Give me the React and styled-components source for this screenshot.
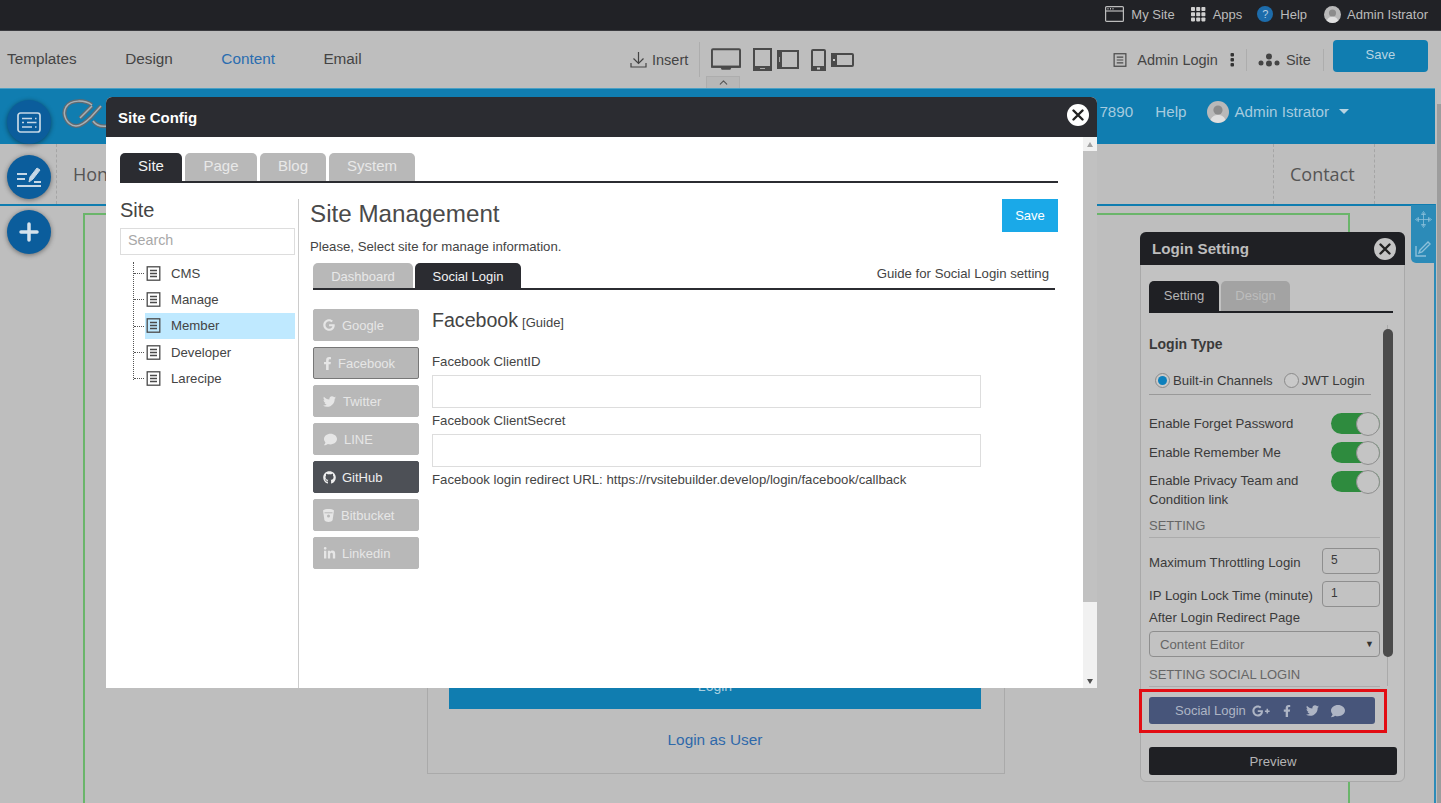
import React from 'react'
import styled, { createGlobalStyle } from 'styled-components'
import {
  FaComment, FaFacebookF, FaGithub, FaGoogle, FaGooglePlusG, FaLinkedinIn, FaTwitter,
} from 'react-icons/fa'
import { FiChevronUp } from 'react-icons/fi'

const GlobalStyle = createGlobalStyle`
  html, body {
    margin: 0;
    padding: 0;
    height: 100%;
    overflow: hidden;
    background: #bebebe;
    font-family: 'Liberation Sans', Arial, sans-serif;
  }
  * { box-sizing: border-box; }
`

const FileIcon = ({ size = 15, color = '#4a4a4a' }) => (
  <svg width={size} height={size} viewBox="0 0 15 15" fill="none" stroke={color} strokeWidth="1.3">
    <rect x="1.2" y="0.8" width="12.6" height="13.4" />
    <path d="M4 4.5h7M4 7.5h7M4 10.5h7" />
  </svg>
)

const Avatar = ({ size, bg = '#b9b9b9' }) => (
  <svg width={size} height={size} viewBox="0 0 22 22">
    <circle cx="11" cy="11" r="11" fill={bg} />
    <circle cx="11" cy="9" r="4.6" fill="#8c8c8c" />
    <path d="M3.5 19c1.5-4 4.5-5 7.5-5s6 1 7.5 5a11 11 0 0 1-15 0z" fill="#e0e0e0" />
  </svg>
)

const CloseIcon = () => (
  <svg width="12" height="12" viewBox="0 0 12 12" stroke="#222" strokeWidth="2.4" strokeLinecap="round">
    <path d="M1.5 1.5l9 9M10.5 1.5l-9 9" />
  </svg>
)

const BucketIcon = () => (
  <svg width="11" height="13" viewBox="0 0 11 13" fill="#e6e6e6">
    <path d="M0 1.500C1 .3 3.500 0 5.500 0s4.500.3 5.500 1.500L9.600 11c-.2 1.200-2.400 2-4.100 2s-3.900-.8-4.100-2z" />
    <path d="M1.500 3.800h8" stroke="#b8b8b8" strokeWidth="1" />
    <circle cx="5.500" cy="7" r="1.500" fill="#b8b8b8" />
  </svg>
)

const logoPaths = 'M30 6C23 1 9 0 4 8c-4 7 0 18 10 19 6 0 11-5 15-9L39 7M18 19L30 7M31 22c3 4 8 6 14 5'

const Logo = () => (
  <svg width="60" height="30" viewBox="0 0 60 30" fill="none">
    <path d={logoPaths} stroke="#5f6b73" strokeWidth="4" />
    <path d={logoPaths} stroke="#a8b0b5" strokeWidth="1.500" />
  </svg>
)

const Page = styled.div`
  position: relative;
  width: 1441px;
  height: 803px;
  overflow: hidden;
  display: flex;
  flex-direction: column;
  background: #bebebe;
`

const TopBar = styled.div`
  height: 31px;
  flex: none;
  background: #212226;
  border-bottom: 1px solid #3a3b3f;
  display: flex;
  justify-content: flex-end;
  align-items: center;
  padding: 0 13px 2px 0;
  color: #bcbcbc;
  font-size: 13px;
`

const TopItem = styled.div`
  display: flex;
  align-items: center;
  gap: ${(p) => p.$gap || 7}px;
  margin-left: ${(p) => p.$left || 0}px;
`

const HelpDot = styled.span`
  width: 16px;
  height: 16px;
  border-radius: 50%;
  background: #1d6cab;
  color: #b9cfe2;
  font-size: 11px;
  display: flex;
  align-items: center;
  justify-content: center;
`

const Toolbar = styled.div`
  position: relative;
  height: 57px;
  flex: none;
  background: #bebebe;
  display: flex;
  align-items: center;
  color: #444;
  font-size: 14.5px;
  padding-left: 7px;
`

const MainNav = styled.nav`
  display: flex;
  gap: 48.500px;
  width: 623px;
  margin-top: -1px;
  font-size: 15.3px;
`

const NavLink = styled.span`
  color: ${(p) => (p.$active ? '#2a6db0' : '#444')};
`

const ToolGroup = styled.div`
  display: flex;
  align-items: center;
  gap: ${(p) => p.$gap || 5}px;
  margin-left: ${(p) => p.$left || 0}px;
`

const Rule = styled.div`
  width: 1px;
  height: ${(p) => p.$h || 35}px;
  background: #adadad;
  margin-left: ${(p) => p.$left || 0}px;
`

const KebabIcon = styled.svg`
  margin-left: 12px;
  flex: none;
`

const Collapse = styled.div`
  position: absolute;
  left: 706px;
  bottom: 0;
  width: 34px;
  height: 12px;
  background: #b7b7b7;
  border: 1px solid #adadad;
  border-bottom: 0;
  color: #555;
  display: flex;
  justify-content: center;
  align-items: center;
`

const SaveTop = styled.div`
  width: 95px;
  height: 32px;
  margin-left: 9px;
  margin-top: -8px;
  border-radius: 4px;
  background: #107db0;
  color: #b7d4e2;
  font-size: 13px;
  display: flex;
  align-items: center;
  justify-content: center;
  padding-bottom: 2px;
`

const SiteHeader = styled.header`
  height: 56px;
  flex: none;
  width: 1435px;
  background: #107db0;
  border-top: 1px solid #4aa0c5;
  display: flex;
  align-items: center;
  padding: 0 86px 0 62px;
  color: #a6cbdf;
  font-size: 15.2px;
`

const LogoWrap = styled.div`
  display: flex;
  margin-top: -6px;
`

const HeaderRight = styled.div`
  margin-left: auto;
  display: flex;
  align-items: center;
  margin-top: -10px;
`

const HeaderLink = styled.span`
  margin-left: ${(p) => p.$left || 0}px;
`

const AvatarSlot = styled.span`
  display: flex;
  margin: 0 5px 0 21px;
`

const Caret = styled.span`
  width: 0;
  height: 0;
  margin-left: 10px;
  border-left: 5px solid transparent;
  border-right: 5px solid transparent;
  border-top: 5px solid #b7d4e2;
`

const SiteNav = styled.div`
  height: 60px;
  flex: none;
  width: 1435px;
  display: flex;
  align-items: stretch;
  color: #555;
  font-family: 'Open Sans', sans-serif;
  font-size: 18px;
  padding-left: 56px;
`

const SiteNavItem = styled.div`
  display: flex;
  align-items: center;
  padding: 0 16px 1px;
  border-left: 1px dashed #a5a5a5;
  width: ${(p) => p.$w || 'auto'};
  ${(p) => p.$end && 'border-right: 1px dashed #a5a5a5;'}
`

const Canvas = styled.main`
  flex: 1;
  width: 1436px;
  border-top: 2px solid #107db0;
  border-right: 2px solid #2c8bb8;
  padding: 7px 0 0 83px;
  min-height: 0;
`

const GreenBox = styled.div`
  width: 1267px;
  height: 700px;
  border: 2px solid #6ab56a;
  border-bottom: 0;
  padding: 0 0 0 342px;
  display: flex;
  flex-direction: column;
`

const LoginCard = styled.div`
  width: 578px;
  height: 566px;
  margin-top: -7px;
  padding: 0 23px 0 21px;
  border: 1px solid #aaa;
  display: flex;
  flex-direction: column;
  justify-content: flex-end;
  align-items: stretch;
`

const LoginBtn = styled.div`
  height: 54px;
  background: #107db0;
  color: #a9cfe0;
  font-size: 14px;
  line-height: 16px;
  text-align: center;
  padding-top: 23px;
`

const LoginUser = styled.div`
  height: 64px;
  padding-top: 22px;
  text-align: center;
  color: #2f69aa;
  font-size: 15.4px;
`

const CircleStack = styled.div`
  position: absolute;
  left: 7px;
  top: 100px;
  display: flex;
  flex-direction: column;
  gap: 11px;
`

const Circle = styled.div`
  width: 44px;
  height: 44px;
  border-radius: 50%;
  background: #0b5d9c;
  box-shadow: 0 1px 5px rgba(0, 0, 0, 0.45);
  display: flex;
  align-items: center;
  justify-content: center;
`

const Handle = styled.div`
  position: absolute;
  left: 1411px;
  top: 205px;
  width: 24px;
  height: 58px;
  background: #2c8bb8;
  border-bottom-left-radius: 5px;
  display: flex;
  flex-direction: column;
  align-items: center;
  justify-content: space-around;
`

const PageScroll = styled.div`
  position: absolute;
  left: 1437px;
  top: 104px;
  width: 4px;
  height: 699px;
  background: #9d9d9d;
`

const Modal = styled.section`
  position: absolute;
  left: 106px;
  top: 97px;
  width: 991px;
  height: 591px;
  border-radius: 6px 6px 0 0;
  display: flex;
  flex-direction: column;
  background: #fff;
`

const ModalHead = styled.div`
  height: 40px;
  flex: none;
  background: #2b2c31;
  border-radius: 6px 6px 0 0;
  display: flex;
  align-items: center;
  justify-content: space-between;
  padding: 0 9px 0 12px;
  color: #fff;
  font-size: 15px;
  font-weight: bold;
`

const CloseBtn = styled.div`
  width: 22px;
  height: 22px;
  border-radius: 50%;
  background: ${(p) => p.$bg || '#fff'};
  margin-top: ${(p) => p.$top || 0}px;
  margin-right: ${(p) => p.$right || 0}px;
  display: flex;
  align-items: center;
  justify-content: center;
`

const ModalBody = styled.div`
  flex: 1;
  min-height: 0;
  display: flex;
`

const ModalMain = styled.div`
  width: 977px;
  padding: 16px 25px 0 14px;
  display: flex;
  flex-direction: column;
`

const TabRow = styled.div`
  display: flex;
  gap: ${(p) => p.$gap || 3}px;
  border-bottom: 2px solid ${(p) => p.$line || '#2b2c31'};
  flex: none;
  width: ${(p) => p.$w || 'auto'};
`

const Tab = styled.div`
  height: ${(p) => p.$h || 28}px;
  width: ${(p) => p.$w}px;
  padding-bottom: ${(p) => p.$pb || 0}px;
  padding-top: ${(p) => p.$pt || 0}px;
  border-radius: 5px 5px 0 0;
  background: ${(p) => (p.$active ? '#2b2c31' : '#b8b8b8')};
  color: ${(p) => (p.$active ? '#f2f2f2' : '#e8e8e8')};
  font-size: ${(p) => p.$size || 15}px;
  display: flex;
  align-items: center;
  justify-content: center;
`

const PanelTab = styled(Tab)`
  background: ${(p) => (p.$active ? '#1f2024' : '#a3a3a3')};
  color: ${(p) => (p.$active ? '#b4b4b4' : '#bdbdbd')};
`

const Split = styled.div`
  flex: 1;
  min-height: 0;
  display: flex;
  margin-top: 16px;
`

const Sidebar = styled.aside`
  width: 179px;
  border-right: 1px solid #ccc;
  padding-right: 3px;
  flex: none;
  color: #444;
`

const SideTitle = styled.div`
  font-size: 20px;
  line-height: 23px;
  margin-bottom: 6px;
`

const SearchBox = styled.div`
  width: 175px;
  height: 27px;
  border: 1px solid #ddd;
  color: #a8a8a8;
  font-size: 14.3px;
  padding: 3px 7px;
`

const Tree = styled.ul`
  position: relative;
  list-style: none;
  margin: 5px 0 0;
  padding: 0 0 0 25px;
  width: 175px;
  &::before {
    content: '';
    position: absolute;
    left: 13px;
    top: 2px;
    height: 118px;
    border-left: 1px dotted #555;
  }
`

const TreeItem = styled.li`
  position: relative;
  height: 26.3px;
  display: flex;
  align-items: center;
  gap: 10px;
  padding-left: 1px;
  font-size: 13.2px;
  color: #444;
  background: ${(p) => (p.$active ? '#bfe9ff' : 'transparent')};
  &::before {
    content: '';
    position: absolute;
    left: -11px;
    top: 13px;
    width: 10px;
    border-top: 1px dotted #555;
  }
`

const Content = styled.div`
  flex: 1;
  min-width: 0;
  padding-left: 11px;
  color: #444;
`

const TitleRow = styled.div`
  display: flex;
  justify-content: space-between;
  align-items: flex-start;
  height: 39px;
`

const Title = styled.h1`
  margin: 0;
  font-size: 24.2px;
  line-height: 29px;
  font-weight: normal;
  color: #4a4a4a;
`

const SaveBtn = styled.div`
  width: 56px;
  height: 33px;
  background: #1aa9e8;
  color: #fff;
  font-size: 13px;
  display: flex;
  align-items: center;
  justify-content: center;
`

const Hint = styled.div`
  font-size: 13.2px;
  line-height: 16px;
  height: 25px;
  padding-top: 1px;
`

const SubTabs = styled.div`
  position: relative;
  margin-left: 3px;
  width: 742px;
`

const GuideLink = styled.span`
  position: absolute;
  right: 6px;
  top: 3px;
  font-size: 13.2px;
  color: #444;
`

const Panes = styled.div`
  display: flex;
  margin-top: 19px;
  margin-left: 3px;
  gap: 13px;
`

const ProviderList = styled.div`
  width: 106px;
  flex: none;
  display: flex;
  flex-direction: column;
  gap: 6px;
`

const Provider = styled.div`
  height: 32px;
  border-radius: 2px;
  background: ${(p) => (p.$dark ? '#4d5056' : '#b8b8b8')};
  border: 1px solid ${(p) => (p.$selected ? '#777' : p.$dark ? '#4d5056' : '#b8b8b8')};
  color: ${(p) => (p.$dark ? '#eee' : '#e6e6e6')};
  font-size: 13px;
  display: flex;
  align-items: center;
  gap: 7px;
  padding-left: 9px;
`

const ProviderIcon = styled.span`
  width: ${(p) => p.$w}px;
  flex: none;
  display: flex;
  justify-content: center;
  svg { flex: none; }
`

const Fields = styled.div`
  flex: 1;
`

const FieldHead = styled.div`
  font-size: 19.6px;
  line-height: 23px;
  height: 43px;
  span { font-size: 13px; margin-left: 4px; }
`

const Label = styled.div`
  font-size: 13.2px;
  line-height: 15px;
  height: ${(p) => p.$h || 23}px;
  padding-top: ${(p) => p.$top || 0}px;
  margin-top: ${(p) => p.$mt || 0}px;
`

const Input = styled.div`
  width: 549px;
  height: 33px;
  border: 1px solid #ddd;
  background: #fff;
  margin-bottom: ${(p) => p.$mb || 0}px;
`

const ScrollTrack = styled.div`
  width: 14px;
  flex: none;
  background: #f1f1f1;
  display: flex;
  flex-direction: column;
  align-items: center;
  padding-bottom: 4px;
`

const Thumb = styled.div`
  width: 100%;
  height: 451px;
  margin-top: 4px;
  background: #c1c1c1;
`

const Arrow = styled.span`
  width: 0;
  height: 0;
  margin-top: ${(p) => (p.$down ? 'auto' : '5px')};
  border-left: 3.5px solid transparent;
  border-right: 3.5px solid transparent;
  ${(p) => (p.$down ? 'border-top: 5px solid #505050;' : 'border-bottom: 5px solid #a3a3a3;')}
`

const Panel = styled.section`
  position: absolute;
  left: 1140px;
  top: 232px;
  width: 265px;
  height: 550px;
  border: 1px solid #a9a9a9;
  border-radius: 6px;
  background: #c2c2c2;
  color: #3a3a3a;
  font-size: 13.2px;
  display: flex;
  flex-direction: column;
`

const PanelHead = styled.div`
  margin: -1px -1px 0;
  height: 33px;
  flex: none;
  background: #1f2024;
  border-radius: 6px 6px 0 0;
  color: #bdbdbd;
  font-size: 15.2px;
  font-weight: bold;
  display: flex;
  align-items: center;
  justify-content: space-between;
  padding: 0 9px 0 12px;
`

const PanelBody = styled.div`
  padding: 16px 11px 0 8px;
  display: flex;
  flex-direction: column;
  flex: 1;
`

const PanelScroll = styled.div`
  position: relative;
  margin-top: 12px;
  width: 244px;
  height: 361px;
  &::after {
    content: '';
    position: absolute;
    right: 5px;
    top: 0;
    bottom: 0;
    border-right: 1px solid #aaa;
  }
`

const PanelThumb = styled.div`
  position: absolute;
  z-index: 1;
  right: 0;
  top: 4px;
  width: 10px;
  height: 328px;
  border-radius: 5px;
  background: #4b4b4b;
`

const PanelContent = styled.div`
  width: 231px;
`

const GroupTitle = styled.div`
  font-size: 14px;
  font-weight: bold;
  line-height: 16px;
  padding-top: 11px;
  height: 38px;
`

const RadioRow = styled.div`
  width: 222px;
  height: 32px;
  padding: 10px 0 0 6px;
  border-bottom: 1px solid #999;
  display: flex;
  align-items: flex-start;
  gap: 3px;
  white-space: nowrap;
`

const Radio = styled.span`
  width: 15px;
  height: 15px;
  flex: none;
  border-radius: 50%;
  border: 1px solid #8a8a8a;
  background: #c9c9c9;
  display: flex;
  align-items: center;
  justify-content: center;
  margin-left: ${(p) => p.$left || 0}px;
  &::after {
    content: '';
    display: ${(p) => (p.$on ? 'block' : 'none')};
    width: 9px;
    height: 9px;
    border-radius: 50%;
    background: #0d80bc;
  }
`

const SwitchRow = styled.div`
  display: flex;
  justify-content: space-between;
  align-items: flex-start;
  width: 231px;
  height: ${(p) => p.$h || 29}px;
  line-height: ${(p) => (p.$h ? 19 : 21)}px;
  margin-top: ${(p) => p.$top || 0}px;
`

const Switch = styled.span`
  position: relative;
  flex: none;
  width: 49px;
  height: 21px;
  border-radius: 11px;
  background: #2e8b3e;
  &::after {
    content: '';
    position: absolute;
    right: 0;
    top: -1px;
    width: 22px;
    height: 22px;
    border-radius: 50%;
    background: #c4c4c4;
    border: 1px solid #8e8e8e;
  }
`

const SectionLabel = styled.div`
  width: 231px;
  height: 23px;
  padding-top: 3px;
  margin-top: ${(p) => p.$top || 0}px;
  border-bottom: 1px solid #ababab;
  color: #666;
  font-size: 13px;
  line-height: 15px;
`

const NumberRow = styled.div`
  display: flex;
  justify-content: space-between;
  align-items: center;
  width: 231px;
  height: 26px;
  margin-top: ${(p) => p.$top || 0}px;
`

const NumberLabel = styled.span`
  padding-top: 2px;
`

const NumberBox = styled.div`
  width: 58px;
  height: 26px;
  border: 1px solid #8e8e8e;
  border-radius: 4px;
  padding: 4px 8px;
  font-size: 12px;
`

const SelectBox = styled.div`
  width: 231px;
  height: 26px;
  margin-top: 5px;
  border: 1px solid #8e8e8e;
  border-radius: 4px;
  color: #666;
  padding: 0 5px 0 10px;
  display: flex;
  align-items: center;
  justify-content: space-between;
  span { font-size: 9px; color: #333; }
`

const RedBox = styled.div`
  margin: 3px 0 0 -10px;
  width: 248px;
  height: 44px;
  border: 3px solid #e30d13;
  padding: 5px 0 0 7px;
  flex: none;
`

const SocialBtn = styled.div`
  width: 226px;
  height: 27px;
  border-radius: 3px;
  background: #47557a;
  color: #aeb5c5;
  font-size: 13px;
  display: flex;
  align-items: center;
  padding-left: 26px;
`

const SocialIcon = styled.span`
  display: flex;
  margin-left: ${(p) => p.$left}px;
`

const PreviewBtn = styled.div`
  width: 248px;
  height: 28px;
  margin-top: 14px;
  border-radius: 3px;
  background: #1f2024;
  color: #b4b4b4;
  display: flex;
  align-items: center;
  justify-content: center;
`

const providers = [
  { name: 'Google', w: 12, icon: <FaGoogle size={12} /> },
  { name: 'Facebook', w: 8, icon: <FaFacebookF size={13} />, selected: true },
  { name: 'Twitter', w: 13, icon: <FaTwitter size={13} /> },
  { name: 'LINE', w: 14, icon: <FaComment size={13} /> },
  { name: 'GitHub', w: 12, icon: <FaGithub size={13} />, dark: true },
  { name: 'Bitbucket', w: 11, icon: <BucketIcon /> },
  { name: 'Linkedin', w: 12, icon: <FaLinkedinIn size={13} /> },
]

const treeItems = ['CMS', 'Manage', 'Member', 'Developer', 'Larecipe']

const App = () => {
  return (
    <Page>
      <GlobalStyle />
      <TopBar>
        <TopItem>
          <svg width="19" height="16" viewBox="0 0 19 16" fill="none" stroke="#bcbcbc" strokeWidth="1.2">
            <rect x="0.6" y="0.6" width="17.8" height="14.8" rx="1" />
            <path d="M0.6 5h17.8" />
            <path d="M2.5 2.8h1M5 2.8h1M7.500 2.8h1" strokeWidth="1.4" />
          </svg>
          My Site
        </TopItem>
        <TopItem $left={16}>
          <svg width="15" height="15" viewBox="0 0 15 15" fill="#d0d0d0">
            {[0, 5.2, 10.4].map((y) => [0, 5.2, 10.4].map((x) => (
              <rect key={`${x}-${y}`} x={x} y={y} width="4" height="4" rx="0.8" />
            )))}
          </svg>
          Apps
        </TopItem>
        <TopItem $left={15}>
          <HelpDot>?</HelpDot>
          Help
        </TopItem>
        <TopItem $left={17} $gap={6}>
          <Avatar size={17} />
          Admin Istrator
        </TopItem>
      </TopBar>

      <Toolbar>
        <MainNav>
          <NavLink>Templates</NavLink>
          <NavLink>Design</NavLink>
          <NavLink $active>Content</NavLink>
          <NavLink>Email</NavLink>
        </MainNav>
        <ToolGroup>
          <svg width="17" height="17" viewBox="0 0 17 17" fill="none" stroke="#444" strokeWidth="1.2">
            <path d="M8.500 1v11M3.500 7.500l5 5 5-5M1 12v4h15v-4" />
          </svg>
          Insert
        </ToolGroup>
        <Rule $left={11} />
        <ToolGroup $left={11} $gap={12}>
          <svg width="30" height="23" viewBox="0 0 31 23" fill="none">
            <rect x="1" y="1" width="29" height="18" rx="1" stroke="#4a4a4a" strokeWidth="2" />
            <path d="M0 18h31v2H21l-1 2h-9l-1-2H0z" fill="#4a4a4a" />
          </svg>
          <ToolGroup $gap={5}>
            <svg width="19" height="23" viewBox="0 0 19 23" fill="none">
              <rect x="1" y="1" width="17" height="21" stroke="#4a4a4a" strokeWidth="2" />
              <path d="M0 18h19v5H0z" fill="#4a4a4a" />
              <path d="M7 20.500h5" stroke="#aaa" />
            </svg>
            <svg width="22" height="19" viewBox="0 0 22 19" fill="none">
              <rect x="1" y="1" width="20" height="17" stroke="#4a4a4a" strokeWidth="2" />
              <path d="M0 0h5v19H0z" fill="#4a4a4a" />
              <path d="M2.500 7v5" stroke="#aaa" />
            </svg>
          </ToolGroup>
          <ToolGroup $gap={5}>
            <svg width="15" height="22" viewBox="0 0 15 22" fill="none">
              <rect x="1" y="1" width="13" height="20" rx="1" stroke="#4a4a4a" strokeWidth="2" />
              <path d="M0 17h15v5H0z" fill="#4a4a4a" />
              <path d="M6 18.500h3v2H6z" fill="#ccc" />
            </svg>
            <svg width="23" height="14" viewBox="0 0 23 14" fill="none">
              <rect x="1" y="1" width="21" height="12" rx="1" stroke="#4a4a4a" strokeWidth="2" />
              <path d="M0 0h6v14H0z" fill="#4a4a4a" />
              <path d="M2 6h2v2H2z" fill="#ccc" />
            </svg>
          </ToolGroup>
        </ToolGroup>
        <ToolGroup $left={259} $gap={10}>
          <FileIcon size={14} />
          <span>Admin Login</span>
        </ToolGroup>
        <KebabIcon width="4" height="14" viewBox="0 0 4 14" fill="#333">
          <rect x="0.500" width="3.500" height="3.500" rx="1" />
          <rect x="0.500" y="5" width="3.500" height="3.500" rx="1" />
          <rect x="0.500" y="10" width="3.500" height="3.500" rx="1" />
        </KebabIcon>
        <Rule $left={12} $h={22} />
        <ToolGroup $left={11} $gap={6}>
          <svg width="22" height="14" viewBox="0 0 22 14" fill="#444">
            <circle cx="11" cy="3.500" r="3" />
            <circle cx="3" cy="10" r="2.500" />
            <circle cx="11" cy="10.500" r="3" />
            <circle cx="19" cy="10" r="2.500" />
          </svg>
          <span>Site</span>
        </ToolGroup>
        <Rule $left={12} $h={22} />
        <SaveTop>Save</SaveTop>
        <Collapse><FiChevronUp size={13} /></Collapse>
      </Toolbar>

      <SiteHeader>
        <LogoWrap><Logo /></LogoWrap>
        <HeaderRight>
          <span>7890</span>
          <HeaderLink $left={22}>Help</HeaderLink>
          <AvatarSlot><Avatar size={22} /></AvatarSlot>
          <span>Admin Istrator</span>
          <Caret />
        </HeaderRight>
      </SiteHeader>

      <SiteNav>
        <SiteNavItem $w="1217px">Hon</SiteNavItem>
        <SiteNavItem $w="102px" $end>Contact</SiteNavItem>
      </SiteNav>

      <Canvas>
        <GreenBox>
          <LoginCard>
            <LoginBtn>Login</LoginBtn>
            <LoginUser>Login as User</LoginUser>
          </LoginCard>
        </GreenBox>
      </Canvas>

      <PageScroll />

      <CircleStack>
        <Circle>
          <svg width="24" height="21" viewBox="0 0 24 21" fill="none" stroke="#c6d8e6" strokeWidth="1.700">
            <rect x="1" y="1" width="22" height="19" rx="2.500" />
            <path d="M5 6.500h10M18 6.500h1.500M5 10.500h2M10 10.500h9.500M5 15h10M18 15h1.500" />
          </svg>
        </Circle>
        <Circle>
          <svg width="26" height="22" viewBox="0 0 26 22" fill="none" stroke="#c6d8e6" strokeWidth="2">
            <path d="M1 8h10M1 13h8M1 20h24" />
            <path d="M13 16l1-5 7-9 3 2-7 9z" fill="#c6d8e6" strokeWidth="1" />
            <path d="M18 16h7" />
          </svg>
        </Circle>
        <Circle>
          <svg width="20" height="20" viewBox="0 0 20 20" stroke="#d5e2ec" strokeWidth="3.500" strokeLinecap="round">
            <path d="M10 2v16M2 10h16" />
          </svg>
        </Circle>
      </CircleStack>

      <Handle>
        <svg width="17" height="17" viewBox="0 0 17 17" fill="none" stroke="#8cc0da" strokeWidth="0.800">
          <path d="M8.500 2v13M2 8.500h13" />
          <path d="M8.500 0.500L6.500 3.500h4zM8.500 16.500l-2-3h4zM0.500 8.500l3-2v4zM16.500 8.500l-3-2v4z" />
        </svg>
        <svg width="17" height="17" viewBox="0 0 17 17" fill="none" stroke="#8cc0da" strokeWidth="1.400">
          <path d="M5 10L13 2l2 2-8 8-3 1zM1 6v10h10" />
        </svg>
      </Handle>

      <Modal>
        <ModalHead>
          Site Config
          <CloseBtn $top={-4} $right={-1}><CloseIcon /></CloseBtn>
        </ModalHead>
        <ModalBody>
          <ModalMain>
            <TabRow>
              <Tab $w={62} $pb={3} $active>Site</Tab>
              <Tab $w={72} $pb={3}>Page</Tab>
              <Tab $w={66} $pb={3}>Blog</Tab>
              <Tab $w={86} $pb={3}>System</Tab>
            </TabRow>
            <Split>
              <Sidebar>
                <SideTitle>Site</SideTitle>
                <SearchBox>Search</SearchBox>
                <Tree>
                  {treeItems.map((item) => (
                    <TreeItem key={item} $active={item === 'Member'}>
                      <FileIcon />
                      {item}
                    </TreeItem>
                  ))}
                </Tree>
              </Sidebar>
              <Content>
                <TitleRow>
                  <Title>Site Management</Title>
                  <SaveBtn>Save</SaveBtn>
                </TitleRow>
                <Hint>Please, Select site for manage information.</Hint>
                <SubTabs>
                  <TabRow $gap={2}>
                    <Tab $w={100} $h={25} $pt={2} $size={13}>Dashboard</Tab>
                    <Tab $w={106} $h={25} $pt={2} $size={13} $active>Social Login</Tab>
                  </TabRow>
                  <GuideLink>Guide for Social Login setting</GuideLink>
                </SubTabs>
                <Panes>
                  <ProviderList>
                    {providers.map((p) => (
                      <Provider key={p.name} $dark={p.dark} $selected={p.selected}>
                        <ProviderIcon $w={p.w}>{p.icon}</ProviderIcon>
                        {p.name}
                      </Provider>
                    ))}
                  </ProviderList>
                  <Fields>
                    <FieldHead>Facebook<span>[Guide]</span></FieldHead>
                    <Label $top={2}>Facebook ClientID</Label>
                    <Input $mb={5} />
                    <Label $h={21}>Facebook ClientSecret</Label>
                    <Input $mb={5} />
                    <Label>Facebook login redirect URL: https://rvsitebuilder.develop/login/facebook/callback</Label>
                  </Fields>
                </Panes>
              </Content>
            </Split>
          </ModalMain>
          <ScrollTrack>
            <Arrow />
            <Thumb />
            <Arrow $down />
          </ScrollTrack>
        </ModalBody>
      </Modal>

      <Panel>
        <PanelHead>
          Login Setting
          <CloseBtn $bg="#c4c4c4"><CloseIcon /></CloseBtn>
        </PanelHead>
        <PanelBody>
          <TabRow $gap={2} $line="#1f2024" $w="244px">
            <PanelTab $w={70} $h={30} $pb={2} $size={13} $active>Setting</PanelTab>
            <PanelTab $w={69} $h={30} $pb={2} $size={13}>Design</PanelTab>
          </TabRow>
          <PanelScroll>
            <PanelThumb />
            <PanelContent>
              <GroupTitle>Login Type</GroupTitle>
              <RadioRow>
                <Radio $on />
                Built-in Channels
                <Radio $left={8} />
                JWT Login
              </RadioRow>
              <SwitchRow $top={18}>Enable Forget Password<Switch /></SwitchRow>
              <SwitchRow>Enable Remember Me<Switch /></SwitchRow>
              <SwitchRow $h={44}>
                <span>Enable Privacy Team and<br />Condition link</span>
                <Switch />
              </SwitchRow>
              <SectionLabel>SETTING</SectionLabel>
              <NumberRow $top={10}><NumberLabel>Maximum Throttling Login</NumberLabel><NumberBox>5</NumberBox></NumberRow>
              <NumberRow $top={7}><NumberLabel>IP Login Lock Time (minute)</NumberLabel><NumberBox>1</NumberBox></NumberRow>
              <Label $top={2} $mt={1} $h={18}>After Login Redirect Page</Label>
              <SelectBox>Content Editor<span>▼</span></SelectBox>
              <SectionLabel $top={7}>SETTING SOCIAL LOGIN</SectionLabel>
            </PanelContent>
          </PanelScroll>
          <RedBox>
            <SocialBtn>
              Social Login
              <SocialIcon $left={6}><FaGooglePlusG size={18} /></SocialIcon>
              <SocialIcon $left={11}><FaFacebookF size={12} /></SocialIcon>
              <SocialIcon $left={13}><FaTwitter size={13} /></SocialIcon>
              <SocialIcon $left={12}><FaComment size={14} /></SocialIcon>
            </SocialBtn>
          </RedBox>
          <PreviewBtn>Preview</PreviewBtn>
        </PanelBody>
      </Panel>
    </Page>
  )
}

export default App
